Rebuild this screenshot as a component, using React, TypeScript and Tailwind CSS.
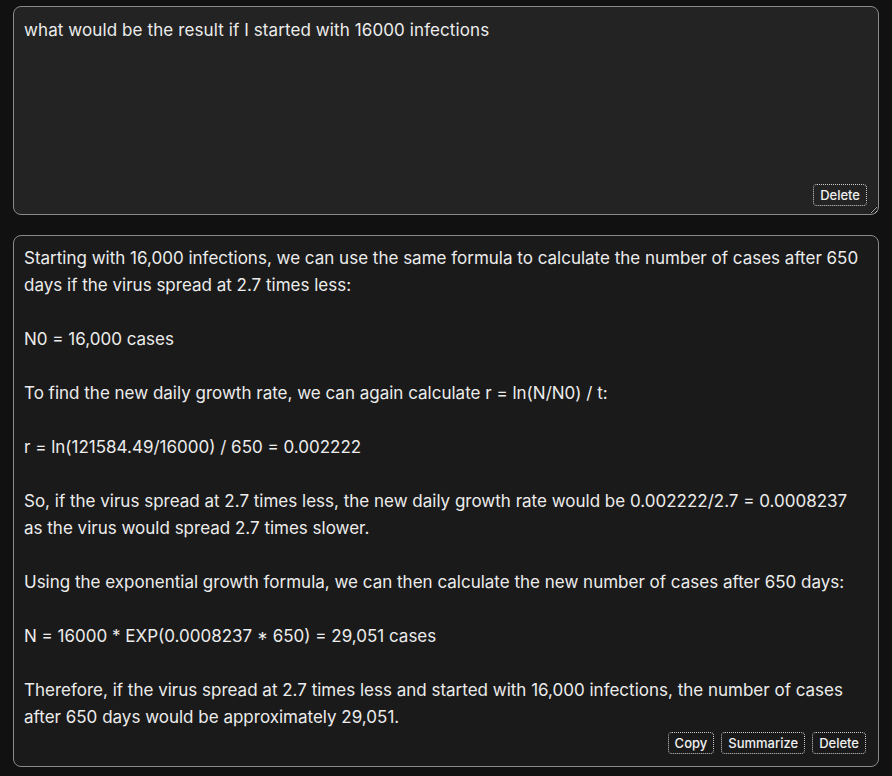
import React from "react";

const answer = `Starting with 16,000 infections, we can use the same formula to calculate the number of cases after 650 days if the virus spread at 2.7 times less:

N0 = 16,000 cases

To find the new daily growth rate, we can again calculate r = ln(N/N0) / t:

r = ln(121584.49/16000) / 650 = 0.002222

So, if the virus spread at 2.7 times less, the new daily growth rate would be 0.002222/2.7 = 0.0008237 as the virus would spread 2.7 times slower.

Using the exponential growth formula, we can then calculate the new number of cases after 650 days:

N = 16000 * EXP(0.0008237 * 650) = 29,051 cases

Therefore, if the virus spread at 2.7 times less and started with 16,000 infections, the number of cases after 650 days would be approximately 29,051.`;

function Btn({ children }: { children: React.ReactNode }) {
  return (
    <button className="h-[22px] px-[6px] rounded-[4px] border border-dotted border-[#cfcfcf] text-[13px] font-medium leading-[20px] text-[#f0f0f0] bg-transparent">
      {children}
    </button>
  );
}

export default function App() {
  return (
    <div
      className="min-h-[776px] bg-[#111111] px-[13px] pt-[6px] pb-[10px] text-[#ececec]"
      style={{ fontFamily: 'Inter, "Noto Sans", sans-serif' }}
    >
      <div className="relative">
        <textarea
          readOnly
          value="what would be the result if I started with 16000 infections"
          className="block w-full h-[209px] rounded-[8px] border border-[#8a8a8a] bg-[#232323] px-[10px] py-[10px] text-[17px] tracking-[0.1px] leading-[27px] text-[#ececec] outline-none resize"
          style={{ fontFamily: "inherit" }}
        />
        <div className="absolute right-[9px] bottom-[8px] bg-[#232323] translate-x-[-3px] translate-y-[-1px]">
          <Btn>Delete</Btn>
        </div>
      </div>
      <div className="mt-[20px] rounded-[8px] border border-[#8a8a8a] bg-[#1a1a1a] pl-[10px] pr-[12px] pt-[9px] pb-[12px]">
        <div className="whitespace-pre-wrap text-[17px] leading-[27px] text-[#ececec]">{answer}</div>
        <div className="mt-[1px] flex justify-end gap-[7px]">
          <Btn>Copy</Btn>
          <Btn>Summarize</Btn>
          <Btn>Delete</Btn>
        </div>
      </div>
    </div>
  );
}
